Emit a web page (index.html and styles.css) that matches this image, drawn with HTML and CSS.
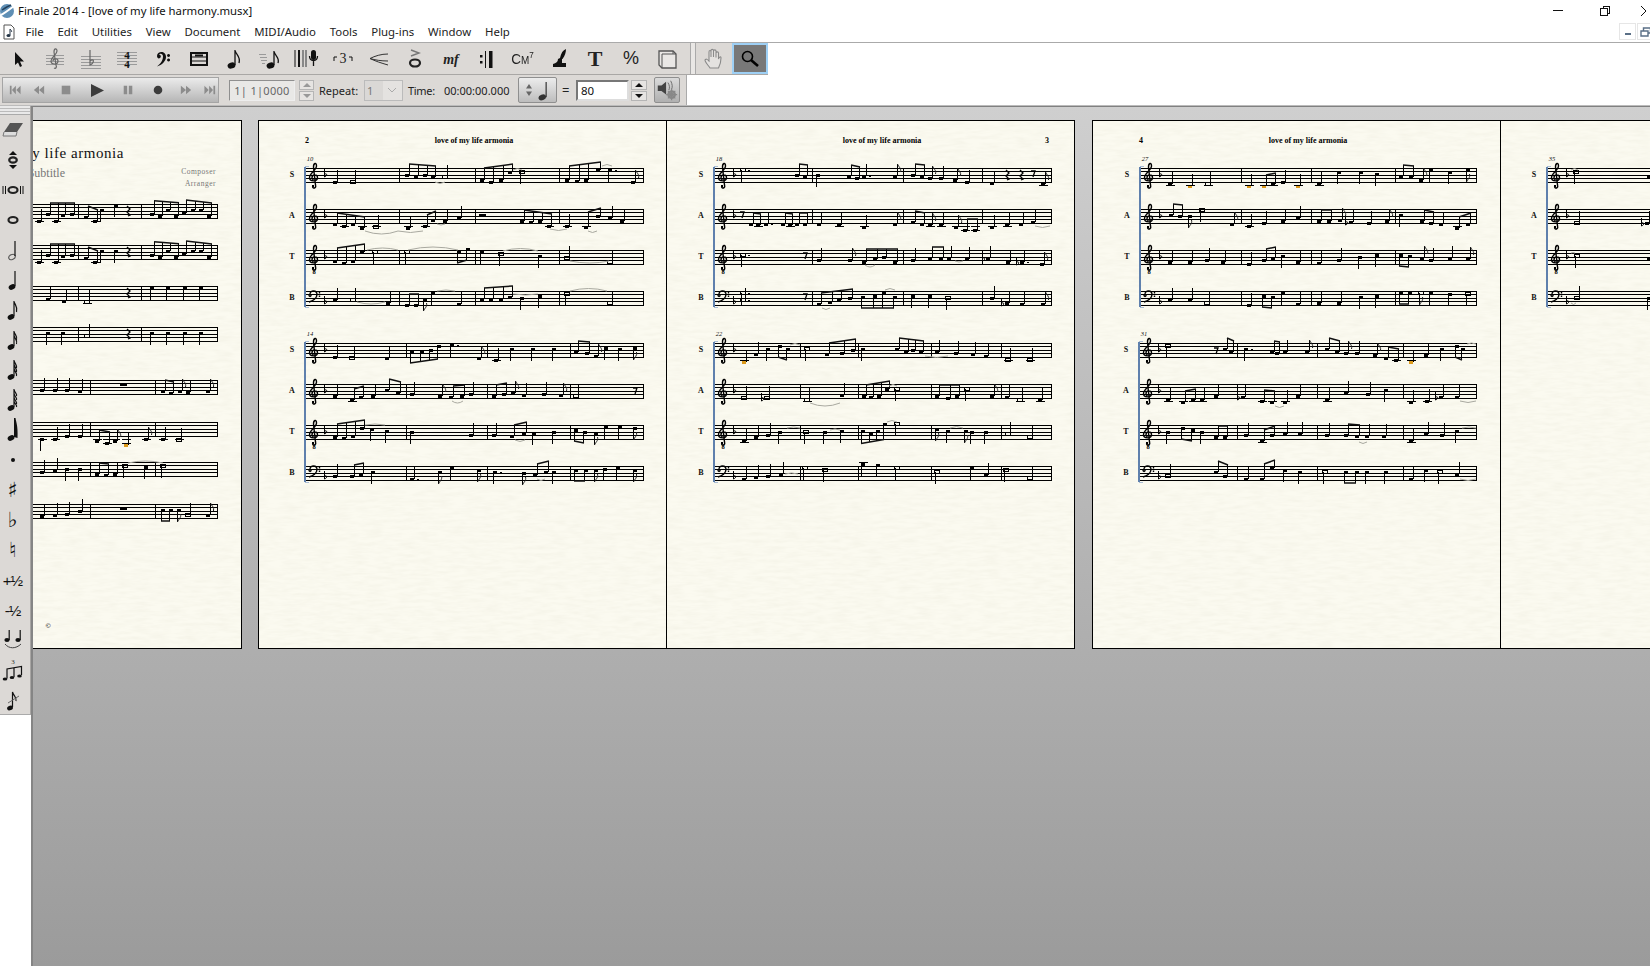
FILE: index.html
```html
<!DOCTYPE html>
<html lang="en">
<head>
<meta charset="utf-8">
<title>Finale 2014 - [love of my life harmony.musx]</title>
<link rel="stylesheet" href="styles.css">
</head>
<body>
<header class="titlebar">
  <svg class="app-logo" viewBox="0 0 16 16"><circle cx="7" cy="8" r="7" fill="#5f8fb5"/><path d="M1 12 C5 10 10 6 14 3" stroke="#fff" stroke-width="2" fill="none"/><path d="M2 7 C5 5 8 3 11 2" stroke="#23405c" stroke-width="1.4" fill="none"/></svg>
  <span class="app-title">Finale 2014 - [love of my life harmony.musx]</span>
  <div class="win-controls">
    <svg class="win-ic" viewBox="0 0 46 20"><path class="win-st" d="M5 9.5H15"/></svg>
    <svg class="win-ic" viewBox="0 0 46 20"><path class="win-st" d="M6.5 7.5h7v7h-7zM9 7.500V5.500h6.500v7h-2"/></svg>
    <svg class="win-ic win-close" viewBox="0 0 10 20"><path class="win-st" d="M1 5L6 10L1 15"/></svg>
  </div>
</header>
<nav class="menubar">
  <svg class="doc-ic" viewBox="0 0 12 16"><path d="M1 1H8L11 4V15H1Z" fill="#fff" stroke="#555"/><path d="M7 5V11" stroke="#234" stroke-width="1"/><ellipse cx="5.500" cy="11.500" rx="2" ry="1.500" fill="#234"/><path d="M7 5C8 6 9 7 8.500 8" stroke="#234" fill="none"/></svg>
  <span class="menu m-file">File</span>
  <span class="menu">Edit</span>
  <span class="menu">Utilities</span>
  <span class="menu">View</span>
  <span class="menu">Document</span>
  <span class="menu">MIDI/Audio</span>
  <span class="menu">Tools</span>
  <span class="menu">Plug-ins</span>
  <span class="menu">Window</span>
  <span class="menu">Help</span>
  <div class="mdi-controls">
    <span class="mdi-btn"><span class="mdi-dash"></span></span>
    <span class="mdi-btn"><svg class="mdi-ic" viewBox="0 0 12 10"><path d="M1 4h7v5H1zM3.500 4V1h7v5H8" fill="none" stroke="#5a6f86" stroke-width="1.400"/></svg></span>
  </div>
</nav>

<section class="toolrow">
  <div class="tools">
    <span class="tool"><svg class="ic" viewBox="0 0 24 24"><path class="blk" d="M8 5V18L11 15.500L13 20L15 19L13 14.500H17Z"/></svg></span>
    <span class="tool"><svg class="ic" viewBox="0 0 24 24"><path class="grl" d="M3 8H21M3 11H21M3 14H21M3 17H21"/><path class="gcl" d="M11 21C13 22 14 20 13 18L11 5C11 1 14 1 14 4C14 8 8 10 8 14C8 18 15 18 15 14C15 11 10 11 10 14"/></svg></span>
    <span class="tool"><svg class="ic" viewBox="0 0 24 24"><path class="grl" d="M2 9H22M2 12H22M2 15H22M2 18H22M2 21H22"/><path class="gcl" d="M11 3V18C14 17 15 14 14 13C13 12.500 12 13 11 14"/></svg></span>
    <span class="tool"><svg class="ic" viewBox="0 0 24 24"><path class="grl" d="M2 5H22M2 8H22M2 11H22M2 14H22M2 17H22"/><text class="timesig" x="12" y="11.500">4</text><text class="timesig" x="12" y="21">4</text></svg></span>
    <span class="tool"><svg class="ic" viewBox="0 0 24 24"><path class="blk" d="M6 9C6 4 15 3 15 10C15 14 11 18 6 19.500C9 17 12 14 12 9.500C12 6 8.500 6 8 8C9 7.500 10 8.500 9.800 10C9 12 6 12 6 9ZM17.500 7a1.500 1.500 0 1 0 .1 0ZM17.500 11.500a1.500 1.500 0 1 0 .1 0Z"/></svg></span>
    <span class="tool"><svg class="ic" viewBox="0 0 24 24"><path class="thick" d="M4 6H20V18H4Z"/><path class="thin" d="M4 10H20M4 14H20"/><path class="thick" d="M8 8.500H16"/></svg></span>
    <span class="tool"><svg class="ic" viewBox="0 0 24 24"><ellipse class="blk" cx="8.500" cy="18.500" rx="4" ry="3" transform="rotate(-20 8.500 18.500)"/><path class="note" d="M12 18V3C12.500 8 18 9 16 16"/></svg></span>
    <span class="tool"><svg class="ic" viewBox="0 0 24 24"><path class="grl" d="M0 7H7M1 10H8M2 13H8M3 16H6"/><ellipse class="blk" cx="11.500" cy="18.500" rx="4" ry="3" transform="rotate(-20 11.500 18.500)"/><path class="note" d="M15 18V4C15.500 9 21 10 19 16"/></svg></span>
    <span class="tool"><svg class="ic ic-wide" viewBox="0 0 26 24"><path class="thin" d="M1 3V20"/><path class="thick" d="M5 3V20"/><path class="grb" d="M9 3V20M12 3V20"/><rect class="blk" x="17" y="3" width="5" height="10" rx="2.500"/><path class="note" d="M15.500 9C15.500 15 23.500 15 23.500 9M19.500 14V19"/></svg></span>
    <span class="tool"><svg class="ic" viewBox="0 0 24 24"><path class="thin" d="M3 14V10H6M18 10H21V14"/><text class="trip" x="12" y="16">3</text></svg></span>
    <span class="tool"><svg class="ic" viewBox="0 0 24 24"><path class="hair" d="M21 7C14 7 8 9 3 11.500C8 13 14 14 21 14M3 11.500C8 14 14 16 21 18"/></svg></span>
    <span class="tool"><svg class="ic" viewBox="0 0 24 24"><path class="gthk" d="M8 3L16 6L8 9"/><ellipse class="wnote" cx="12" cy="16" rx="5" ry="3.500"/></svg></span>
    <span class="tool"><svg class="ic ic-wide" viewBox="0 0 26 24"><text class="dyn" x="13" y="17">mf</text></svg></span>
    <span class="tool"><svg class="ic" viewBox="0 0 24 24"><path class="blk" d="M5 8h2.500v2.500H5zM5 14h2.500v2.500H5zM14 4h3.500v17h-3.500z"/><path class="thin" d="M10.500 4V21"/></svg></span>
    <span class="tool"><span class="chord">C<small class="chord-s">M</small><sup class="chord-u">7</sup></span></span>
    <span class="tool"><svg class="ic" viewBox="0 0 24 24"><path class="blk" d="M13 11C14 6 16 3 19 2C19 5 18 9 15.500 12H15V16H19V20H6V17C9 16 11 15 11 12Z"/></svg></span>
    <span class="tool"><span class="tool-t">T</span></span>
    <span class="tool"><span class="tool-pc">%</span></span>
    <span class="tool"><svg class="ic" viewBox="0 0 24 24"><path class="page-b" d="M4 4H18L21 7V21H7L4 18Z"/><path class="page-f" d="M7 7H18V4M7 7V21M18 7H21"/></svg></span>
  </div>
  <span class="grip"></span>
  <div class="tools-2">
    <span class="tool-2"><svg class="ic" viewBox="0 0 24 24"><path class="handp" d="M8 21C6 18 3 15 3 13C4 11 6 13 7 14V5C7 3 9 3 9 5V10V3.500C9 2 11.500 2 11.500 3.500V10V4C11.500 2.500 14 2.500 14 4V10.500V6C14 4.500 16.500 4.500 16.500 6V12C17 10 19 9 19 11C19 15 18 18 16.500 21Z"/></svg></span>
    <span class="tool-2 active"><svg class="ic" viewBox="0 0 24 24"><circle class="mag" cx="9.500" cy="9.500" r="5"/><path class="magh" d="M13 13L20 19"/></svg></span>
  </div>
</section>

<section class="transrow">
  <div class="transport-wrap">
    <div class="transport">
      <span class="tb w24"><svg class="tic" viewBox="0 0 14 14"><path class="tg" d="M1 2h2v10H1zM8 2V12L3.500 7ZM13.500 2V12L8.500 7Z"/></svg></span>
      <span class="tb w24"><svg class="tic" viewBox="0 0 14 14"><path class="tg" d="M7 2V12L1 7ZM13 2V12L7 7Z"/></svg></span>
      <span class="tb w30"><svg class="tic" viewBox="0 0 14 14"><path class="tg" d="M2 2H12V12H2Z"/></svg></span>
      <span class="tb w32"><svg class="tic-l" viewBox="0 0 16 14"><path class="td" d="M1 0V14L15 7Z"/></svg></span>
      <span class="tb w30"><svg class="tic" viewBox="0 0 14 14"><path class="tg" d="M2 2H6V12H2ZM8 2H12V12H8Z"/></svg></span>
      <span class="tb w30"><svg class="tic" viewBox="0 0 14 14"><circle class="td" cx="7" cy="7" r="5"/></svg></span>
      <span class="tb w26"><svg class="tic" viewBox="0 0 14 14"><path class="tg" d="M1 2V12L7 7ZM7 2V12L13 7Z"/></svg></span>
      <span class="tb w22"><svg class="tic" viewBox="0 0 14 14"><path class="tg" d="M.5 2V12L5.500 7ZM6 2V12L10.500 7ZM11 2h2v10h-2z"/></svg></span>
    </div>
    <span class="counter">1| 1|0000</span>
    <span class="spin spin-a"><i class="up"></i><i class="dn"></i></span>
    <span class="lbl lbl-rep">Repeat:</span>
    <span class="select"><span class="sel-val">1</span><svg class="sel-ar" viewBox="0 0 10 6"><path d="M1 1L5 5L9 1" fill="none" stroke="#aaa"/></svg></span>
    <span class="lbl lbl-time">Time:</span>
    <span class="lbl lbl-val">00:00:00.000</span>
    <span class="notebtn">
      <svg class="nb-ar" viewBox="0 0 8 14"><path d="M4 1L7 5.500H1ZM4 13L1 8.500H7Z" fill="#666"/></svg>
      <svg class="nb-note" viewBox="0 0 14 24"><ellipse cx="5" cy="20" rx="4.500" ry="3.200" transform="rotate(-20 5 20)" fill="#333"/><path d="M9.500 20V2" stroke="#333" stroke-width="1.400"/></svg>
    </span>
    <span class="lbl lbl-eq">=</span>
    <span class="tempo">80</span>
    <span class="spin spin-b"><i class="up bk"></i><i class="dn bk"></i></span>
    <span class="speaker"><svg class="sp-ic" viewBox="0 0 26 26"><path d="M3 8H7L12 4V18L7 14H3Z" fill="#444"/><path d="M14 5C16 8 16 11 15 13M17 3C19 7 19 10 18 12" fill="none" stroke="#666"/><circle cx="18" cy="18" r="3.500" fill="none" stroke="#888" stroke-width="2.500"/><path d="M18 12V24M12 18H24M14 14L22 22M22 14L14 22" stroke="#888" stroke-width="1.300"/></svg></span>
  </div>
</section>

<main class="workspace">
  <aside class="side">
    <div class="palette">
      <span class="grips"></span>
      <span class="pi"><svg class="pic" viewBox="0 0 24 24"><path d="M9 5H22L16 14H3Z" fill="#555"/><path d="M3 14L2 18H15L16 14" fill="#ddd" stroke="#777"/></svg></span>
      <span class="pi"><svg class="pic" viewBox="0 0 24 24"><path class="blk" d="M12 3L16 7H8ZM12 21L8 17H16Z"/><ellipse class="wnote" cx="12" cy="12" rx="3.800" ry="2.600"/></svg></span>
      <span class="pi"><svg class="pic" viewBox="0 0 24 24"><path class="thin" d="M2 8V16M4.500 8V16M19.500 8V16M22 8V16"/><ellipse class="wnote" cx="12" cy="12" rx="4.500" ry="3"/></svg></span>
      <span class="pi"><svg class="pic" viewBox="0 0 24 24"><ellipse class="wnote" cx="12" cy="12" rx="4.500" ry="3"/></svg></span>
      <span class="pi"><svg class="pic" viewBox="0 0 24 24"><ellipse class="hnote" cx="11" cy="19" rx="3.400" ry="2.400" transform="rotate(-25 11 19)"/><path class="pst" d="M14 18V3"/></svg></span>
      <span class="pi"><svg class="pic" viewBox="0 0 24 24"><ellipse class="blk" cx="11" cy="19" rx="3.500" ry="2.600" transform="rotate(-25 11 19)"/><path class="pst" d="M14 18V3"/></svg></span>
      <span class="pi"><svg class="pic" viewBox="0 0 24 24"><ellipse class="blk" cx="10" cy="19" rx="3.500" ry="2.600" transform="rotate(-25 10 19)"/><path class="pst" d="M13 18V3C13.500 7 17 8 15.500 14"/></svg></span>
      <span class="pi"><svg class="pic" viewBox="0 0 24 24"><ellipse class="blk" cx="10" cy="19" rx="3.500" ry="2.600" transform="rotate(-25 10 19)"/><path class="pst" d="M13 18V3C13.500 7 17 8 15.500 12M13 7C13.500 11 17 12 15.500 16"/></svg></span>
      <span class="pi"><svg class="pic" viewBox="0 0 24 24"><ellipse class="blk" cx="10" cy="19" rx="3.500" ry="2.600" transform="rotate(-25 10 19)"/><path class="pst" d="M13 18V2C13.500 6 16.500 7 15.500 10M13 6C13.500 10 16.500 11 15.500 14M13 10C13.500 14 16.500 15 15.500 18"/></svg></span>
      <span class="pi"><svg class="pic" viewBox="0 0 24 24"><ellipse class="blk" cx="10" cy="20" rx="3.500" ry="2.600" transform="rotate(-25 10 20)"/><path class="pst" d="M13 19V1C13.500 5 16.500 6 15.500 8M13 5C13.500 9 16.500 10 15.500 12M13 9C13.500 13 16.500 14 15.500 16M13 13C13.500 16 16.500 17 15.500 19"/></svg></span>
      <span class="pi"><svg class="pic" viewBox="0 0 24 24"><ellipse class="blk" cx="10" cy="20" rx="3.500" ry="2.600" transform="rotate(-25 10 20)"/><path class="blk" d="M13 0H14.500C15 4 17 7 16.500 20L13 19Z"/></svg></span>
      <span class="pi"><svg class="pic" viewBox="0 0 24 24"><circle class="blk" cx="12" cy="12" r="2"/></svg></span>
      <span class="pi pg">&#9839;</span>
      <span class="pi pg">&#9837;</span>
      <span class="pi pg">&#9838;</span>
      <span class="pi ptx">+&#189;</span>
      <span class="pi ptx">-&#189;</span>
      <span class="pi"><svg class="pic" viewBox="0 0 24 24"><ellipse class="blk" cx="6" cy="12" rx="2.600" ry="2"/><ellipse class="blk" cx="17" cy="12" rx="2.600" ry="2"/><path class="pst" d="M8.200 12V2M19.200 12V2"/><path class="slur-ic" d="M4 16C8 21 15 21 20 16"/></svg></span>
      <span class="pi"><svg class="pic" viewBox="0 0 24 24"><text class="tup-n" x="12" y="6">3</text><ellipse class="blk" cx="4" cy="21" rx="2.300" ry="1.600"/><ellipse class="blk" cx="11" cy="19.500" rx="2.300" ry="1.600"/><ellipse class="blk" cx="18.500" cy="18" rx="2.300" ry="1.600"/><path class="pst" d="M6 20.500V11L20.500 8.500V17M13 19V10"/></svg></span>
      <span class="pi"><svg class="pic" viewBox="0 0 24 24"><ellipse class="blk" cx="9" cy="20" rx="3" ry="2.300" transform="rotate(-25 9 20)"/><path class="pst" d="M11.500 19V4C12.500 8 16 9 15 13"/><path class="grac" d="M7 15L18 8"/></svg></span>
    </div>
  </aside>
  <div class="canvas">
    <div class="page page-cut" data-page="0"></div>
    <div class="spread">
      <div class="page" data-page="1"></div>
      <div class="page page-join" data-page="2"></div>
    </div>
    <div class="spread spread-next">
      <div class="page" data-page="3"></div>
      <div class="page page-join" data-page="4"></div>
    </div>
  </div>
</main>
<script src="score.js"></script>
</body>
</html>
```

FILE: styles.css
```css
* { box-sizing: border-box; }
html, body { margin: 0; height: 100%; }
body {
  width: 1650px; height: 966px; overflow: hidden; background: #fff;
  display: flex; flex-direction: column;
  font-family: "Noto Sans", "Liberation Sans", sans-serif; font-size: 12px; color: #111;
}
.titlebar { height: 21px; flex: none; display: flex; align-items: center; background: #fff; }
.app-logo { width: 16px; height: 16px; flex: none; }
.app-title { margin-left: 2px; font-size: 11.350px; white-space: nowrap; }
.win-controls { margin-left: auto; display: flex; align-items: center; height: 21px; }
.win-ic { width: 46px; height: 20px; }
.win-close { width: 10px; }
.win-st { fill: none; stroke: #111; stroke-width: 1; shape-rendering: crispEdges; }
.win-close .win-st { shape-rendering: auto; }

.menubar { height: 22px; flex: none; display: flex; align-items: center; gap: 13.800px; border-bottom: 1px solid #aaa; position: relative; }
.doc-ic { width: 12px; height: 16px; margin-left: 3px; flex: none; }
.menu { font-size: 11.400px; white-space: nowrap; color: #222; }
.m-file { margin-left: -3.300px; }
.mdi-controls { margin-left: auto; display: flex; gap: 1px; margin-right: -4px; }
.mdi-btn { width: 17px; height: 17px; border: 1px solid #e6e6e6; display: flex; align-items: center; justify-content: center; }
.mdi-dash { width: 6px; height: 2px; background: #5a6f86; margin-top: 5px; }
.mdi-ic { width: 12px; height: 10px; }

.toolrow { height: 32px; flex: none; display: flex; background: #fff; }
.tools { width: 690px; display: flex; padding-left: 1px; background: #dcd9d6; border-bottom: 1px solid #a9a7a5; }
.tool { width: 36px; height: 31px; flex: none; display: flex; align-items: center; justify-content: center; }
.ic { width: 24px; height: 24px; }
.ic-wide { width: 26px; }
.grip { width: 6px; background: #e9e7e5; border-left: 1px solid #aaa; border-right: 1px solid #aaa; border-bottom: 1px solid #a9a7a5; }
.tools-2 { width: 72px; display: flex; background: #dcd9d6; border-bottom: 1px solid #a9a7a5; }
.tool-2 { width: 36px; height: 31px; display: flex; align-items: center; justify-content: center; }
.tool-2.active { background: #787878; border: 2px solid #9ed0f5; }
.blk { fill: #111; }
.grl { stroke: #9a9a9a; stroke-width: 1; fill: none; shape-rendering: crispEdges; }
.grb { stroke: #888; stroke-width: 2; fill: none; }
.gcl { stroke: #666; stroke-width: 1.200; fill: none; }
.thin { stroke: #111; stroke-width: 1; fill: none; }
.thick { stroke: #111; stroke-width: 2; fill: none; }
.note { stroke: #111; stroke-width: 1.300; fill: none; }
.hair { stroke: #333; stroke-width: 1; fill: none; }
.gthk { stroke: #777; stroke-width: 1.400; fill: none; }
.wnote { fill: none; stroke: #222; stroke-width: 2.200; }
.hnote { fill: none; stroke: #555; stroke-width: 1.100; }
.timesig { font: bold 11px "Liberation Serif", serif; text-anchor: middle; fill: #111; }
.trip { font: 14px "Liberation Serif", serif; text-anchor: middle; fill: #222; }
.dyn { font: italic bold 14px "Liberation Serif", serif; text-anchor: middle; fill: #222; }
.chord { font: 15px "Liberation Sans", sans-serif; color: #222; white-space: nowrap; display: inline-flex; align-items: baseline; transform: scaleX(.9); }
.chord-s { font-size: 11px; }
.chord-u { font-size: 9px; align-self: flex-start; }
.tool-t { font: bold 22px "Liberation Serif", serif; color: #222; }
.tool-pc { font: 18px "Liberation Sans", sans-serif; color: #222; }
.page-b { fill: #e9e7e5; stroke: #555; stroke-width: 1.300; }
.page-f { fill: none; stroke: #555; stroke-width: 1; }
.handp { fill: #e4e2e0; stroke: #8a8a8a; stroke-width: 1.100; }
.mag { fill: #777; stroke: #000; stroke-width: 1.600; }
.magh { stroke: #000; stroke-width: 2.600; fill: none; }

.transrow { height: 31px; flex: none; display: flex; background: #fff; border-bottom: 1px solid #bbb; }
.transport-wrap { width: 687px; display: flex; align-items: center; background: #dcd9d6; border-right: 1px solid #aaa; height: 30px; padding-left: 2px; }
.transport { width: 217px; height: 26px; display: flex; flex: none; background: linear-gradient(#ebebeb, #b6b6b6); border: 1px solid #a5a5a5; }
.tb { display: flex; align-items: center; justify-content: center; flex: none; }
.w24 { width: 24px; } .w30 { width: 30px; } .w32 { width: 32px; } .w26 { width: 26px; } .w22 { width: 21px; }
.tic { width: 12px; height: 12px; }
.tic-l { width: 15px; height: 13px; }
.tg { fill: #8c8c8c; }
.td { fill: #3c3c3c; }
.counter { margin-left: 10px; width: 66px; height: 21px; flex: none; border: 1px solid #8f8f8f; border-right-color: #eee; border-bottom-color: #eee; background: #e9e8e6; font-size: 11px; color: #666; display: flex; align-items: center; justify-content: center; letter-spacing: .3px; white-space: nowrap; }
.spin { display: flex; flex-direction: column; gap: 1px; width: 15px; height: 21px; flex: none; }
.spin-a { margin-left: 4px; }
.spin-b { margin-left: 2px; width: 16px; }
.spin i { flex: 1; background: #e6e4e2; border: 1px solid #b5b5b5; position: relative; }
.spin i::after { content: ""; position: absolute; left: 3px; top: 2px; border-left: 4px solid transparent; border-right: 4px solid transparent; }
.spin .up::after { border-bottom: 4px solid #999; }
.spin .dn::after { border-top: 4px solid #999; }
.spin .bk.up::after { border-bottom-color: #111; }
.spin .bk.dn::after { border-top-color: #111; }
.lbl { font-size: 11px; white-space: nowrap; color: #222; flex: none; }
.lbl-rep { margin-left: 5px; width: 40px; }
.select { margin-left: 5px; width: 39px; height: 21px; border: 1px solid #bbb; display: flex; align-items: center; background: #e4e2e0; color: #777; font-size: 11px; flex: none; }
.sel-val { width: 18px; padding-left: 2px; background: #dad8d6; height: 100%; display: flex; align-items: center; }
.sel-ar { width: 10px; height: 6px; margin-left: 4px; }
.lbl-time { margin-left: 5px; width: 27px; letter-spacing: -.3px; }
.lbl-val { margin-left: 9px; width: 67px; }
.notebtn { margin-left: 7px; width: 39px; height: 26px; flex: none; border: 1px solid #8f8f8f; border-radius: 2px; background: linear-gradient(#ececec, #bdbdbd); display: flex; align-items: center; padding-left: 6px; gap: 5px; }
.nb-ar { width: 8px; height: 14px; }
.nb-note { width: 12px; height: 21px; }
.lbl-eq { margin-left: 5px; width: 9px; font-size: 13px; }
.tempo { margin-left: 5px; width: 53px; height: 21px; flex: none; border: 2px solid #777; border-right-color: #ddd; border-bottom-color: #ddd; background: #fff; font-size: 11.500px; display: flex; align-items: center; padding-left: 3px; }
.speaker { margin-left: 7px; width: 26px; height: 26px; flex: none; background: linear-gradient(#dadada, #b0b0b0); border: 1px solid #8f8f8f; border-radius: 2px; }
.sp-ic { width: 24px; height: 24px; display: block; }

.workspace { flex: 1; display: flex; min-height: 0; background: #fff; }
.side { width: 31px; flex: none; background: #fff; }
.palette { height: 609px; width: 31px; background: #dcd9d6; border-right: 1px solid #a8a6a4; border-bottom: 1px solid #aaa; display: flex; flex-direction: column; }
.grips { height: 9px; flex: none; border-bottom: 1px solid #aaa; background: repeating-linear-gradient(#e9e9e9 0 2px, #bbb 2px 3px); }
.pi { height: 30px; flex: none; width: 25px; display: flex; align-items: center; justify-content: center; }
.pic { width: 24px; height: 24px; }
.pg { font: 21px "DejaVu Sans", sans-serif; color: #111; }
.ptx { font: 15px "Liberation Sans", sans-serif; color: #111; white-space: nowrap; letter-spacing: -1px; }
.pst { stroke: #111; stroke-width: 1.200; fill: none; }
.slur-ic { stroke: #444; stroke-width: 1; fill: none; }
.tup-n { font: 7px "Liberation Serif", serif; text-anchor: middle; fill: #333; }
.grac { stroke: #666; stroke-width: 1; }

.canvas {
  flex: 1; min-width: 0; display: flex; align-items: flex-start; gap: 16px; overflow: hidden;
  padding-top: 13px; border-left: 2px solid #858585; border-top: 1px solid #808080;
  background: linear-gradient(#cfcfcf, #9b9b9b);
}
.page { width: 409px; height: 529px; flex: none; background: #fbfaf0; border: 1px solid #000; }
.page-cut { margin-left: -200px; }
.spread { display: flex; flex: none; }
.spread-next { margin-left: 1px; }
.page-join { margin-left: -1px; }
.sheet { display: block; width: 407px; height: 527px; }
.paper { filter: url(#fibre); }
.sl { stroke: #000; stroke-width: 1; shape-rendering: crispEdges; }
.bar { stroke: #000; stroke-width: 1; shape-rendering: crispEdges; }
.stem { stroke: #000; stroke-width: 1; shape-rendering: crispEdges; }
.led { stroke: #000; stroke-width: 1; shape-rendering: crispEdges; }
.head { fill: #000; shape-rendering: crispEdges; }
.head.gold { fill: #dd9a1a; }
.ho { fill: none; stroke: #000; stroke-width: 1; shape-rendering: crispEdges; }
.beam { stroke: #111; stroke-width: 1.500; fill: none; }
.flag { stroke: #222; stroke-width: 1; fill: none; }
.slur { stroke: #a9a9a0; stroke-width: 1; fill: none; }
.rest { stroke: #000; stroke-width: 1.300; fill: none; }
.clef { stroke: #000; stroke-width: 1.400; fill: none; }
.acc { stroke: #000; stroke-width: 1; fill: none; }
.brk { fill: none; stroke: #5f80ad; stroke-width: 2; }
.brk-tip { fill: none; stroke: #a9bcd4; stroke-width: 1; }
.t-head { font: bold 8px "Liberation Serif", serif; fill: #000; text-anchor: middle; }
.t-lab { font: bold 8px "Liberation Serif", serif; fill: #111; text-anchor: middle; }
.t-mno { font: italic 6.500px "Liberation Serif", serif; fill: #111; text-anchor: middle; }
.t-8 { font: bold 6.500px "Liberation Serif", serif; fill: #000; text-anchor: middle; }
.t-title { font: 15px "Liberation Serif", serif; fill: #111; text-anchor: end; letter-spacing: .55px; }
.t-sub { font: 12px "Liberation Serif", serif; fill: #777; text-anchor: end; }
.t-comp { font: 7.500px "Liberation Serif", serif; fill: #777; text-anchor: end; letter-spacing: .5px; }
.t-copy { font: bold 7px "Liberation Serif", serif; fill: #000; text-anchor: middle; }
```

FILE: score.js
```js
(function () {
  var NS = 'http://www.w3.org/2000/svg';
  var ORIGIN = [-167, 258, 666, 1092, 1500];
  var sheets = [];

  function el(tag, attrs, parent, text) {
    var n = document.createElementNS(NS, tag);
    for (var k in attrs) n.setAttribute(k, attrs[k]);
    if (text !== undefined) n.textContent = text;
    if (parent) parent.appendChild(n);
    return n;
  }

  function line(g, cls, x1, y1, x2, y2) {
    el('line', { 'class': cls, x1: x1, y1: y1, x2: x2, y2: y2 }, g);
  }

  document.querySelectorAll('.page').forEach(function (host) {
    var i = +host.getAttribute('data-page');
    var svg = el('svg', { 'class': 'sheet', viewBox: (ORIGIN[i] + 1) + ' 121 407 527' }, host);
    if (i === 0) {
      var f = el('filter', { id: 'fibre', x: 0, y: 0, width: '100%', height: '100%' }, el('defs', {}, svg));
      el('feTurbulence', { type: 'fractalNoise', baseFrequency: '0.06 0.3', numOctaves: 3, seed: 4 }, f);
      el('feColorMatrix', { values: '0 0 0 0 0.6  0 0 0 0 0.58  0 0 0 0 0.45  0.22 0 0 0 -0.075' }, f);
    }
    el('rect', { 'class': 'paper', x: ORIGIN[i], y: 120, width: 410, height: 530 }, svg);
    sheets[i] = svg;
  });

  function treble(g, x, top) {
    el('path', { 'class': 'clef', transform: 'translate(' + x + ' ' + top + ')',
      d: 'M-1.500 18.500C-1 21 2.500 20.500 1.500 17L-.5 -1C-.5 -5 2.500 -6 2.500 -2C2.500 2 -4.500 5 -4.500 9.500C-4.500 14 3.500 14 3.500 9.500C3.500 6 -2 6 -2 9.500C-2 11 -1 11.500 -.5 12' }, g);
    el('rect', { 'class': 'head', x: x - 2, y: top + 17, width: 2, height: 2 }, g);
  }

  function bass(g, x, top) {
    el('path', { 'class': 'clef', transform: 'translate(' + x + ' ' + top + ')',
      d: 'M-5 3C-5 -1 2 -1 2 3.500C2 7 -2 10 -6 11M-5 3.500a1 1 0 1 0 .1 0M4.500 1v1.500M4.500 4.500v1.500' }, g);
  }

  function flat(g, x, y) {
    el('path', { 'class': 'acc', d: 'M' + x + ' ' + (y - 6) + 'V' + (y + 2) + 'C' + (x + 3) + ' ' + (y + 1) + ' ' + (x + 3) + ' ' + (y - 2) + ' ' + x + ' ' + (y - 1) }, g);
  }

  function head(g, x, y, f) {
    if (f.indexOf('h') >= 0) {
      el('rect', { 'class': 'ho', x: x - 2.5, y: y - 1.5, width: 5, height: 3 }, g);
    } else {
      el('rect', { 'class': 'head' + (f.indexOf('o') >= 0 ? ' gold' : ''), x: x - 2, y: y - 1, width: 4, height: 3 }, g);
    }
  }

  function parseNote(tok) {
    var m = tok.match(/^(\d+),(\d+)(.*)$/);
    return { x: +m[1], y: +m[2], f: m[3] };
  }

  function ledgers(g, x, y, top) {
    var ly = y - top;
    if (ly >= 16) line(g, 'led', x - 4, top + 17.5, x + 5, top + 17.5);
    if (ly >= 20) line(g, 'led', x - 4, top + 21.5, x + 5, top + 21.5);
    if (ly <= -2) line(g, 'led', x - 4, top - 3.5, x + 5, top - 3.5);
  }

  function drawStaff(g, sys, top, zt, data, showClef, clefKind) {
    var X = function (v) { return Math.round(sys.ox + v / sys.sx); };
    var Y = function (v) { return Math.round(top + (v - zt) / 3); };
    var start = Math.round(sys.ox + sys.start / sys.sx);
    var end = Math.round(sys.ox + sys.end / sys.sx);

    [0, 3, 7, 10, 14].forEach(function (o) { line(g, 'sl', start, top + o + .5, end, top + o + .5); });
    sys.bars.concat([sys.end]).forEach(function (b) { line(g, 'bar', X(b) + .5, top, X(b) + .5, top + 15); });

    if (showClef) {
      var cx = start + 9;
      if (clefKind === 'b') {
        bass(g, cx + 1, top);
        flat(g, start + 19.500, top + 11);
      } else {
        treble(g, cx, top);
        flat(g, start + 19.500, top + 7);
        if (clefKind === '8') el('text', { 'class': 't-8', x: cx, y: top + 24 }, g, '8');
      }
    }

    data.split(/\s+/).filter(Boolean).forEach(function (tok) {
      if (tok[0] === '~') {
        var a = tok.slice(1).split(',').map(Number);
        var sy = Y(a[1]);
        el('path', { 'class': 'slur', d: 'M' + X(a[0]) + ' ' + sy + 'Q' + ((X(a[0]) + X(a[2])) / 2) + ' ' + (sy + a[3]) + ' ' + X(a[2]) + ' ' + sy }, g);
        return;
      }
      if (tok.indexOf('|') >= 0) {
        var down = tok[0] === 'v';
        var notes = tok.replace(/^v/, '').split('|').map(parseNote).map(function (n) {
          return { x: X(n.x), y: Y(n.y), f: n.f };
        });
        var dir = down ? 1 : -1;
        var off = down ? -2 : 2;
        var first = notes[0], last = notes[notes.length - 1];
        var a0 = first.y + dir * 11, a1 = last.y + dir * 11;
        if (Math.abs(a1 - a0) > 4) a1 = a0 + (a1 > a0 ? 4 : -4);
        var at = function (n) {
          var t = last.x === first.x ? 0 : (n.x - first.x) / (last.x - first.x);
          return a0 + (a1 - a0) * t;
        };
        var shift = 0;
        notes.forEach(function (n) {
          var gap = (n.y - at(n)) * -dir;
          if (gap < 8) shift = Math.max(shift, 8 - gap);
        });
        a0 += dir * shift; a1 += dir * shift;
        notes.forEach(function (n) {
          head(g, n.x, n.y, n.f);
          ledgers(g, n.x, n.y, top);
          line(g, 'stem', n.x + off + .5, n.y, n.x + off + .5, at(n));
        });
        line(g, 'beam', first.x + off, a0, last.x + off + 1, a1);
        return;
      }
      var n = parseNote(tok), x = X(n.x), y = Y(n.y), f = n.f;
      if (f.indexOf('r') >= 0) {
        el('path', { 'class': 'rest', d: 'M' + (x - 1) + ' ' + (y - 5) + 'l3 3 -3 3 3 3 -2 1' }, g);
        return;
      }
      if (f.indexOf('w') >= 0) {
        el('rect', { 'class': 'head', x: x - 3, y: y - 1, width: 7, height: 3 }, g);
        return;
      }
      if (f.indexOf('e') >= 0) {
        el('path', { 'class': 'rest', d: 'M' + (x - 2) + ' ' + (y - 2) + 'h4l-2 6' }, g);
        return;
      }
      var isDown = f.indexOf('v') >= 0 || (f.indexOf('^') < 0 && y - top < 7);
      var sx = isDown ? x - 2 : x + 2;
      var sEnd = isDown ? y + 12 : y - 12;
      head(g, x, y, f);
      ledgers(g, x, y, top);
      line(g, 'stem', sx + .5, y, sx + .5, sEnd);
      if (f.indexOf('d') >= 0) el('rect', { 'class': 'head', x: x + 5, y: y, width: 2, height: 1 }, g);
      if (f.indexOf('b') >= 0) flat(g, x - 5.500, y + 1);
      if (f.indexOf('f') >= 0) {
        var k = isDown ? -1 : 1;
        el('path', { 'class': 'flag', d: 'M' + (sx + .5) + ' ' + sEnd + 'c1 ' + (3 * k) + ' 4 ' + (4 * k) + ' 3 ' + (8 * k) }, g);
      }
    });
  }

  var LETTERS = ['S', 'A', 'T', 'B'];

  function drawSystem(sys) {
    var svg = sheets[sys.page];
    var g = el('g', {}, svg);
    var start = Math.round(sys.ox + sys.start / sys.sx);
    sys.staves.forEach(function (data, i) {
      var kind = i < 2 ? 't' : (i === 2 ? '8' : 'b');
      drawStaff(g, sys, sys.tops[i], sys.zt[i], data, !sys.bare, kind);
      if (!sys.bare) el('text', { 'class': 't-lab', x: start - 13, y: sys.tops[i] + 9 }, g, LETTERS[i]);
    });
    if (!sys.bare) {
      var t0 = sys.tops[0], t3 = sys.tops[3] + 15;
      el('path', { 'class': 'brk', d: 'M' + start + ' ' + (t0 - 1) + 'V' + (t3 + 1) }, g);
      el('path', { 'class': 'brk-tip', d: 'M' + start + ' ' + (t0 - 1.500) + 'h4M' + start + ' ' + (t3 + 1.500) + 'h4' }, g);
      el('text', { 'class': 't-mno', x: start + 5, y: t0 - 7 }, g, sys.no);
    }
  }

  var Z1 = [145, 268, 391, 514], Z2 = [70, 193, 316, 439];
  var T1 = [168, 209, 250, 291], T2 = [343, 384, 425, 466];

  var SYSTEMS = [
    { page: 1, ox: 255, sx: 3, start: 150, end: 1163, bars: [433, 661, 913], tops: T1, zt: Z1, no: '10', staves: [
      '240,186 295,186hd 455,165|483,168|510,165|535,172 570,172h 682,182|708,186|738,182|765,158 800,158hv 936,182|965,185|992,182|1028,150 1065,150dv 1133,186f ~540,188,570,3 ~775,150,800,-3 ~1040,140,1070,-3',
      '240,312|267,318|294,312|320,324 362,322h 458,324 510,318|535,302 570,304 612,296 680,285w 800,304|828,308|855,304|882,318 936,318 993,322|1028,290 1065,296 1100,304 ~330,333,430,6 ~430,333,505,3 ~545,312,570,2 ~885,328,935,3 ~1000,335,1025,3',
      '240,425|267,431|294,425|320,398 360,398hv 455,398hv v612,397|640,388 680,396v 738,404hv 855,410v 936,414h 1065,426h ~335,390,430,-4 ~460,390,610,-6 ~745,395,850,-5 ~945,425,1062,4',
      '240,542 295,542h 398,550 455,556|483,556 510,537fv 535,520v 612,552 680,538|708,538|738,537|765,532 800,535v 855,528v 936,522hv 1065,550h ~305,548,390,4 ~545,515,600,-2 ~775,522,850,2 ~945,515,1055,-5'
    ] },
    { page: 1, ox: 255, sx: 3, start: 150, end: 1163, bars: [452, 697, 945], tops: T2, zt: Z2, no: '14', staves: [
      '240,112 292,116h 396,116 v470,96|500,96|527,90|552,80 590,76dv 672,116f 722,122 772,88v 835,88v 896,88v 962,98|995,100 1022,110f 1052,84v 1095,88v 1140,84fv',
      '240,228 290,240|318,232 354,228 396,212|430,220 470,222d 555,228f 587,232|620,230 648,224 718,228|747,224 775,220f 806,226 868,224 918,226f 962,228h 1140,212e ~590,245,625,4',
      '240,352|267,356|294,350|320,324 352,328v 395,334v 470,336dv 648,346 718,346 772,348|808,340 836,340v 896,336v v962,332|990,336 1022,340fv 1052,322v 1095,322v 1140,325fv ~330,316,390,-2 ~780,360,810,3',
      '240,470 290,470|318,464 355,456v 470,478d 555,456fv 590,445v 672,450fv 720,456dv 806,460fv 840,466|872,456 896,456v v962,450|992,450 1022,450fv 1050,448v 1090,444v 1140,450fv ~845,478,870,3'
    ] },
    { page: 2, ox: 665, sx: 3, start: 148, end: 1157, bars: [441, 715, 950], tops: T1, zt: Z1, no: '18', staves: [
      '235,150hdv 395,166|420,170 460,166dv 553,170|575,174 597,170^d 690,170f 745,166|770,168 795,174f 828,174 870,182f 905,188 980,190 1025,165r 1067,165r 1105,160e 1133,194f',
      '232,282e 258,312|280,316 303,312d 353,312|375,316 397,312|420,312 462,312 522,316 597,322 690,312f 745,306|770,312 795,316f 828,316 872,322f 900,332|930,332 980,322 1025,316 1068,312 1105,308 ~1110,318,1155,3',
      '235,406hdv 420,405e 462,420d 555,420f 596,426|630,418|658,412|690,426 745,420 795,416|828,416 853,416 905,418 968,414b 1030,428 1072,428db 1130,432f ~600,436,630,4 ~870,424,895,2',
      '235,520hdv 235,542hd 420,528e 462,552|495,548|522,542|555,536 v595,532|630,528|658,520|690,532 745,528v 795,528v 850,536hv 982,536 1025,550b 1072,552 1133,552f ~470,565,495,3 ~660,512,690,-3'
    ] },
    { page: 2, ox: 665, sx: 3, start: 148, end: 1157, bars: [404, 578, 797, 1007], tops: T2, zt: Z2, no: '22', staves: [
      '237,126o 272,104 308,88v v345,78|370,88 425,88hv 485,102|530,100|565,90 595,88v 697,88|722,96|745,90|768,96 815,96 872,100 925,104 962,110 1030,122h 1095,122h ~375,76,404,-3 ~780,108,850,3',
      '237,234h 305,234hb 425,240h 530,226 597,230|617,232|642,228|665,208 697,208hv 815,228|850,234|875,228 905,208hv 982,230f 1025,232 1065,240h 1125,240 ~435,250,525,6 ~672,200,695,-3',
      '237,364 272,352 308,346 345,336v 422,336hv 480,336v 530,334v v595,334|618,342|640,334|660,314 695,312hv 815,328fv 848,334v 903,335fv 922,336v 962,336v 1030,342h 1095,352h ~365,326,405,-2 ~495,332,525,-2 ~665,308,695,-3 ~855,325,895,-3',
      '237,478 272,472 308,470 348,464 420,445hv 480,450hv 595,434v 640,436v 697,444hv 815,458hv 922,444v 962,466 1022,450hv 1095,476h ~360,464,400,-2'
    ] },
    { page: 3, ox: 1080, sx: 2.75, start: 165, end: 1090, bars: [444, 636, 866], tops: T1, zt: Z1, no: '27', staves: [
      '248,194 302,200o 352,194h 464,200o 505,200o|530,194 557,186 600,200o 658,194 712,158v 772,158v 818,162v 882,168|910,172 938,180f 965,152v 1018,158v 1068,152fv',
      '250,286|276,290 303,288fv 335,272hv 418,312f 464,318 505,310 558,304 600,296 656,304|685,304 714,302f 745,308b 795,310 845,304f 882,286v 940,304|965,310 992,312 1038,324|1068,312',
      '248,426 302,426 350,420 392,426 464,434 506,420|530,414 557,408v 600,426 658,430 712,420 770,412v 818,405v v882,405|908,410 940,416f 965,420 1018,416 1068,418f',
      '248,542 302,540 350,550h 464,556 v505,530|530,533 557,520v 600,552 658,550 712,550 772,533v 818,528v v882,520|908,520 938,520hfv 965,520v 1018,522v 1068,522hv'
    ] },
    { page: 3, ox: 1080, sx: 3, start: 178, end: 1188, bars: [470, 710, 970], tops: T2, zt: Z2, no: '31', staves: [
      '265,78hdv 407,90e 435,88|452,96 497,88dv 575,96|592,100 614,96 682,96f 740,88|770,96 798,100f 830,100 886,106f 917,116|948,122 992,126o 1038,106 1085,88v v1130,78|1150,88 ~1160,72,1188,-2',
      '265,240 310,248|338,240 366,240 408,228 490,232b 546,244|575,248 614,248 655,230 740,240 798,220 863,224 918,212v 992,248 1040,244 1082,232b 1130,232 ~585,260,612,3 ~1140,244,1188,3',
      '265,336v v310,326|338,332 366,336v 407,352|435,352 497,346 546,364|576,346 614,342 660,342 740,346 798,346|830,350 862,350 912,350 992,364 1038,342 1085,346 1130,334v ~838,366,860,3 ~1145,326,1188,-2',
      '265,470hd 407,458|435,470 497,478 546,478|576,444 614,450v 660,458v 735,456hv v797,456|830,458 862,458v 918,458v 992,478 1038,450v 1080,456hv 1130,464 ~1140,478,1188,3'
    ] },
    { page: 4, ox: 1080, sx: 2.75, start: 1285, end: 2000, bars: [], tops: T1, zt: Z1, no: '35', staves: [
      '1365,158hv 1565,172 ~1350,150,1370,-3',
      '1368,310h 1560,310b',
      '1368,410hv 1565,418 ~1350,400,1362,-1',
      '1368,535h 1565,535v ~1350,550,1365,3'
    ] },
    { page: 0, ox: 0, sx: 3, start: 0, end: 650, bars: [235, 424], tops: [204, 245, 286, 327], zt: [298, 421, 545, 667], bare: true, staves: [
      '118,348 143,328|168,348|190,332|215,328 258,338|284,348 305,315v 347,302v 385,318r 456,328|480,334|503,316|527,334 553,326|578,316|603,316|628,334',
      '118,471 143,451|168,471|190,455|215,451 258,461|284,471 305,438v 347,438v 385,441r 456,451|480,457|503,439|527,457 553,449|578,439|603,439|628,457',
      '145,584 192,590 260,592h 385,565r 455,550v 503,552v 555,550v 603,552v',
      '145,684v 190,684v 260,694h 385,688r 455,684v 503,684v 555,684v 603,684v'
    ] },
    { page: 0, ox: 0, sx: 3, start: 0, end: 650, bars: [271, 466], tops: [380, 422, 462, 504], zt: [826, 65, 187, 311], bare: true, staves: [
      '125,855 165,855 200,855 240,860 368,838w 488,860|512,866 540,858f 564,862 625,860f',
      '125,116v 165,116 200,108 240,108 292,122|320,128 345,122f 378,134o 438,116f 490,116 538,120h',
      '125,216 165,210 200,208v 240,208v 292,222|318,225 345,222 375,200hv 437,202v 490,200h ~385,190,490,-4',
      '125,348 165,344 200,340 240,332 368,323w v488,328|512,328 537,328fv 563,345h 625,344f'
    ] }
  ];

  SYSTEMS.forEach(drawSystem);

  function heading(page, x, label, nx, num) {
    el('text', { 'class': 't-head', x: x, y: 143 }, sheets[page], label);
    el('text', { 'class': 't-head', x: nx, y: 143 }, sheets[page], num);
  }
  var SONG = 'love of my life armonia';
  heading(1, 474, SONG, 307, '2');
  heading(2, 882, SONG, 1047, '3');
  heading(3, 1308, SONG, 1141, '4');

  var first = sheets[0];
  el('text', { 'class': 't-title', x: 124, y: 158 }, first, SONG);
  el('text', { 'class': 't-sub', x: 65, y: 177 }, first, 'Subtitle');
  el('text', { 'class': 't-comp', x: 216, y: 174 }, first, 'Composer');
  el('text', { 'class': 't-comp', x: 216, y: 186 }, first, 'Arranger');
  el('text', { 'class': 't-copy', x: 48, y: 628 }, first, '\u00A9');
})();
```
